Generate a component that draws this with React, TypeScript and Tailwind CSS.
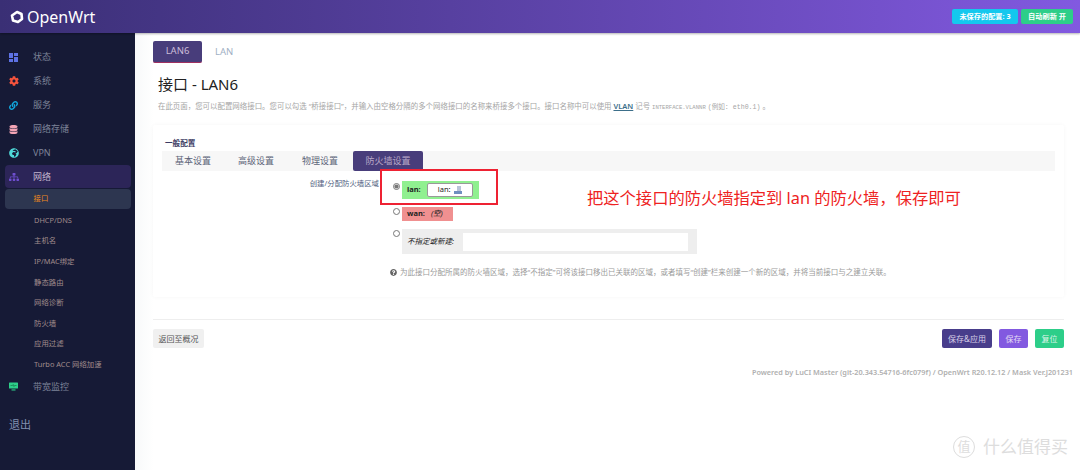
import { FaCog, FaDatabase, FaGlobeAfrica, FaLink, FaSitemap, FaQuestionCircle } from "react-icons/fa";

const font = "[font-family:'Noto_Sans','Noto_Sans_CJK_SC',sans-serif]";

function DashIcon() {
  return (
    <svg width="9" height="9" viewBox="0 0 9 9" fill="#5e72e4">
      <rect x="0" y="0" width="4" height="5" />
      <rect x="5" y="0" width="4" height="3" />
      <rect x="0" y="6" width="4" height="3" />
      <rect x="5" y="4" width="4" height="5" />
    </svg>
  );
}

function MonitorIcon() {
  return (
    <svg width="9" height="9" viewBox="0 0 9 9" fill="#2dce89">
      <rect x="0" y="0.5" width="9" height="6" rx="0.6" />
      <rect x="2.5" y="7.4" width="4" height="1.1" />
      <path d="M1.5 3.5 H3.5 L4.2 2.5 L5 4.5 L5.6 3.5 H7.5" fill="none" stroke="#12643f" strokeWidth="0.6" />
    </svg>
  );
}

function Logo() {
  return (
    <svg width="14" height="14" viewBox="0 0 14 14" fill="none" stroke="#fff" strokeWidth="2.6">
      <path d="M7 2 L11.5 4 L12 9 L8 12 L3 10.5 L2 5.5 Z" strokeLinejoin="round" />
    </svg>
  );
}

const menuTop = [
  { label: "状态", icon: <DashIcon /> },
  { label: "系统", icon: <FaCog size={10} color="#f5533d" /> },
  { label: "服务", icon: <FaLink size={9} color="#11a9e0" /> },
  { label: "网络存储", icon: <FaDatabase size={9} color="#f3a4b5" /> },
  { label: "VPN", icon: <FaGlobeAfrica size={10} color="#4fd8d8" /> },
];

const subMenu = ["DHCP/DNS", "主机名", "IP/MAC绑定", "静态路由", "网络诊断", "防火墙", "应用过滤", "Turbo ACC 网络加速"];

function Sidebar() {
  return (
    <aside className="w-[135px] shrink-0 bg-[#161a36] pt-3 flex flex-col">
      {menuTop.map((m) => (
        <div key={m.label} className="h-6 flex items-center pl-[9px]">
          <span className="w-[24px] flex justify-start">{m.icon}</span>
          <span className="text-[9px] text-[#7d8398]">{m.label}</span>
        </div>
      ))}
      <div className="h-[23px] mx-[4.5px] flex items-center pl-[4.5px] rounded bg-[#2c2558]">
        <span className="w-[24px]"><FaSitemap size={10} color="#6f4fd0" /></span>
        <span className="text-[9px] text-[#c0b4cc]">网络</span>
      </div>
      <div className="h-[20px] mt-px mx-[4.5px] flex items-center pl-[29px] rounded bg-[#2d3650]">
        <span className="text-[7.4px] text-[#f08a1d]">接口</span>
      </div>
      <div className="pt-px">
        {subMenu.map((s) => (
          <div key={s} className="h-[20.6px] flex items-center pl-[34px] text-[7.4px] text-[#a08c8c]">
            {s}
          </div>
        ))}
      </div>
      <div className="h-6 flex items-center pl-[9px]">
        <span className="w-[24px]"><MonitorIcon /></span>
        <span className="text-[9px] text-[#7d8398]">带宽监控</span>
      </div>
      <div className="mt-[18px] pl-[9px] text-[11px] text-[#8090b0]">退出</div>
    </aside>
  );
}

function FirewallForm() {
  return (
    <div className="flex mt-[10px]">
      <div className="w-[218px] -mt-[3px] text-right text-[7.4px] text-[#525f7f] pr-px">创建/分配防火墙区域</div>
      <div className="pl-[13px] flex flex-col">
        <div className="flex gap-[1px]">
          <input type="radio" defaultChecked className="w-[7px] h-[7px] mt-[2px] mr-[1px] accent-[#777]" />
          <div className="w-[77px] h-[18px] bg-[#90f090] flex items-center pl-[5px] gap-[6px] text-[7.5px] text-[#222]">
            <b>lan:</b>
            <span className="w-[46px] h-[14px] bg-white rounded-[2px] border border-[#999] flex items-center justify-center gap-[3px] font-normal">
              lan:
              <svg width="8" height="8" viewBox="0 0 8 8">
                <rect x="3" y="0" width="4" height="5" fill="#b8c4d8" />
                <rect x="0" y="5" width="8" height="3" fill="#6f8fc0" />
              </svg>
            </span>
          </div>
        </div>
        <div className="flex gap-[1px] mt-[8px]">
          <input type="radio" className="w-[7px] h-[7px] mt-[1px] mr-[1px] accent-[#777]" />
          <div className="w-[51px] h-[14px] bg-[#f09090] flex items-center pl-[5px] gap-[6px] text-[7.5px] text-[#222]">
            <b>wan:</b>
            <em>(空)</em>
          </div>
        </div>
        <div className="flex gap-[1px] mt-[8px]">
          <input type="radio" className="w-[7px] h-[7px] mt-[1px] mr-[1px] accent-[#777]" />
          <div className="w-[295px] h-[25px] bg-[#eeeeee] flex items-center pl-[5px] text-[7.5px] text-[#222]">
            <em className="w-[56px]">不指定或新建:</em>
            <span className="w-[225px] h-[18px] bg-white" />
          </div>
        </div>
        <div className="mt-[13px] -ml-[3px] flex items-center gap-[3px] text-[7.5px] leading-[11px] text-[#9a9a9a] whitespace-nowrap">
          <FaQuestionCircle size={7} color="#666" />
          为此接口分配所属的防火墙区域，选择“不指定”可将该接口移出已关联的区域，或者填写“创建”栏来创建一个新的区域，并将当前接口与之建立关联。
        </div>
      </div>
    </div>
  );
}

export default function App() {
  return (
    <div className={`relative w-[1080px] h-[470px] overflow-hidden bg-white flex flex-col ${font}`}>
      <header className="h-[33px] shrink-0 z-10 shadow-[0_1px_2px_rgba(0,0,0,0.3)] bg-gradient-to-r from-[#3a2f75] to-[#8259e0] flex items-center pl-[10px] pr-[7px]">
        <Logo />
        <span className="ml-[3px] text-[16px] text-white">OpenWrt</span>
        <span className="ml-auto h-[15px] w-[66px] rounded-[2px] bg-[#14c8ee] text-white font-bold text-[7.2px] flex items-center justify-center">未保存的配置: 3</span>
        <span className="ml-[3px] h-[15px] w-[52px] rounded-[2px] bg-[#2dce89] text-white font-bold text-[7.2px] flex items-center justify-center">自动刷新 开</span>
      </header>
      <div className="flex flex-1 min-h-0">
        <Sidebar />
        <main className="flex-1 pl-[18px] pr-[16px] pt-[8px] bg-gradient-to-r from-[#f8f9fa] to-white to-[2%]">
          <div className="flex items-center">
            <span className="w-[49px] h-[22px] rounded-[2px] bg-[#483d7b] border-b border-[#a03060] text-[9.5px] text-[#cbbcd8] flex items-center justify-center">LAN6</span>
            <span className="ml-[13px] text-[9.5px] text-[#9fb0c4]">LAN</span>
          </div>
          <h2 className="mt-[10px] ml-[5px] text-[15px] leading-[22px] text-[#222]">接口 - LAN6</h2>
          <p className="mt-[5px] ml-[5px] h-[12px] text-[7.45px] leading-[12px] text-[#a5a5a5] whitespace-nowrap">
            在此页面，您可以配置网络接口。您可以勾选 “桥接接口”，并输入由空格分隔的多个网络接口的名称来桥接多个接口。接口名称中可以使用 <u className="text-[#3d6f8a] font-semibold text-[7.5px]">VLAN</u> 记号 <span className="font-['Liberation_Mono','Noto_Sans_CJK_SC',monospace] text-[5.6px]">INTERFACE.VLANNR</span> <span className="font-['Liberation_Mono','Noto_Sans_CJK_SC',monospace] text-[6.6px]">(例如: eth0.1)</span> 。
          </p>
          <section className="mt-[13px] w-[911px] h-[172px] bg-white rounded-[2px] shadow-[0_0_4px_rgba(0,0,0,0.04)] pt-[13px] px-[9px]">
            <div className="pl-[3px] text-[7.6px] leading-[10px] font-bold text-[#3c3c64]">一般配置</div>
            <div className="mt-[3px] h-[20px] w-[893px] bg-[#f7f7f7] flex items-center text-[9px] text-[#5c6478]">
              <span className="ml-[13px] w-[63px]">基本设置</span>
              <span className="w-[64px]">高级设置</span>
              <span className="w-[51px]">物理设置</span>
              <span className="w-[70px] h-[20px] rounded-[2px] bg-[#483d7b] text-[#b9a8c8] flex items-center justify-center">防火墙设置</span>
            </div>
            <FirewallForm />
          </section>
          <div className="mt-[22px] w-[911px] border-t border-[#eeeeee]" />
          <div className="mt-[9px] w-[911px] flex items-center gap-[7px] text-[8px]">
            <span className="w-[51px] h-[19px] rounded-[2px] bg-[#f0f0f0] text-[#555] flex items-center justify-center mr-auto">返回至概况</span>
            <span className="w-[50px] h-[19px] rounded-[2px] bg-[#483d8b] text-[#d8d0e8] flex items-center justify-center">保存&amp;应用</span>
            <span className="w-[29px] h-[19px] rounded-[2px] bg-[#8259e0] text-[#e4dcf4] flex items-center justify-center">保存</span>
            <span className="w-[29px] h-[19px] rounded-[2px] bg-[#2dce89] text-[#dff5ea] flex items-center justify-center">复位</span>
          </div>
          <div className="mt-[18px] -mr-[9px] text-right text-[7.3px] font-semibold leading-[12px] text-[#b0b0b0] whitespace-nowrap">
            Powered by LuCI Master (git-20.343.54716-6fc079f) / OpenWrt R20.12.12 / Mask Ver.J201231
          </div>
        </main>
      </div>
      {/* annotation drawn over the form */}
      <div className="absolute left-[380px] top-[169px] w-[118px] h-[36px] border-2 border-[#ee2233]" />
      <div className="absolute left-[587px] top-[187px] text-[16.3px] leading-[22px] text-[#ee2222] whitespace-nowrap">
        把这个接口的防火墙指定到 lan 的防火墙，保存即可
      </div>
      {/* watermark */}
      <div className="absolute left-[953px] top-[436px] flex items-center text-[#dddddd]">
        <span className="w-[22px] h-[22px] rounded-full border border-[#dddddd] flex items-center justify-center text-[13px]">值</span>
        <span className="ml-[8px] text-[17px] leading-[22px]">什么值得买</span>
      </div>
    </div>
  );
}
